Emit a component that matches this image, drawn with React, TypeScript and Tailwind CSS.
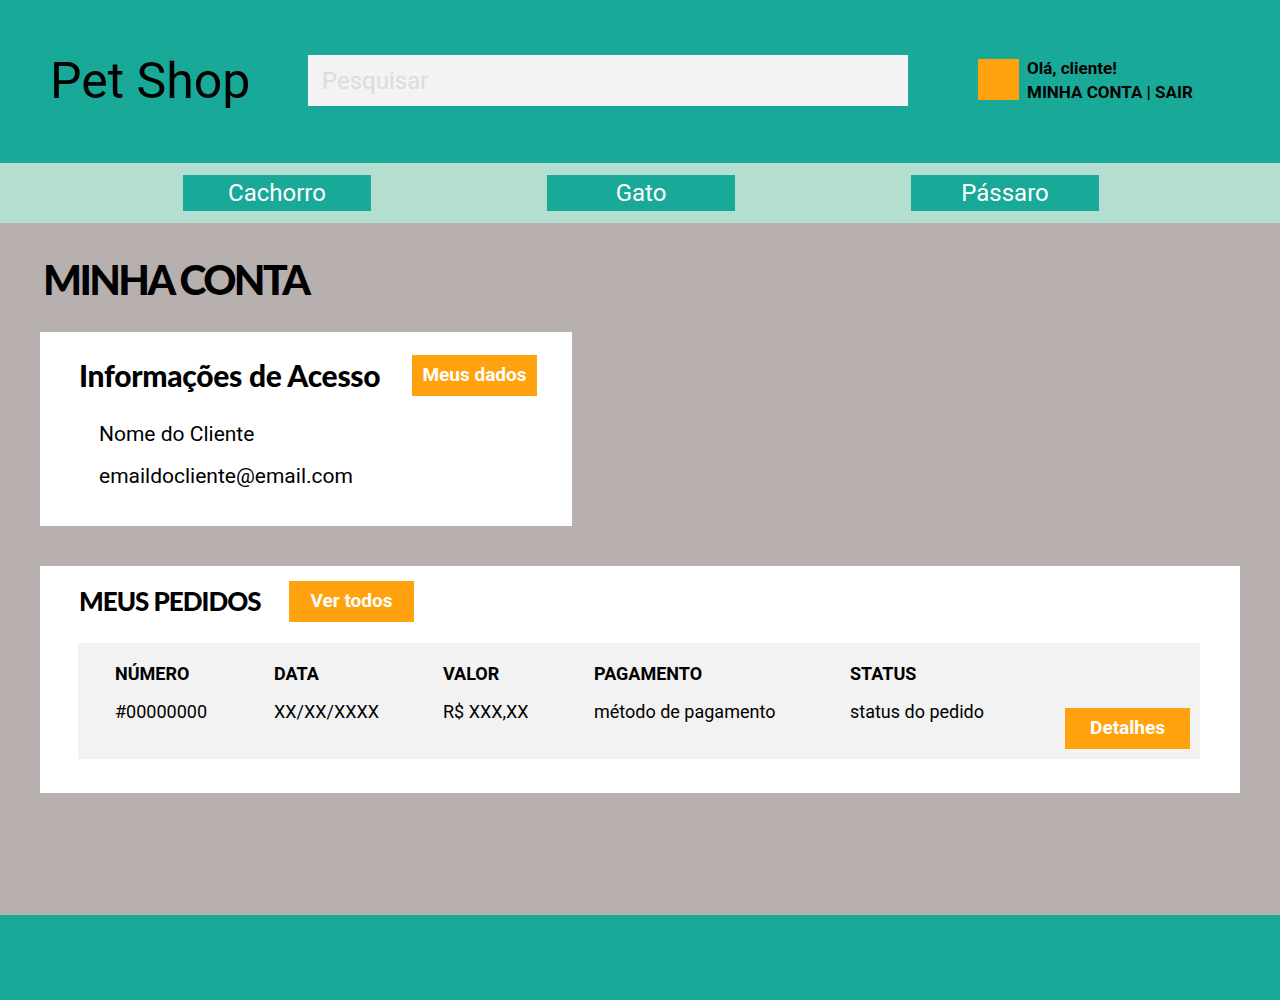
const body = "font-['Roboto','Noto_Sans',sans-serif]";
const head = "font-['Lato','Noto_Sans',sans-serif]";

function OrangeButton({ label }: { label: string }) {
  return (
    <button className={`${body} h-[41px] w-[125px] bg-[#ffa20e] text-[19px] font-bold text-white`}>
      {label}
    </button>
  );
}

const columns = [
  { title: "NÚMERO", value: "#00000000", width: "w-[159px]" },
  { title: "DATA", value: "XX/XX/XXXX", width: "w-[169px]" },
  { title: "VALOR", value: "R$ XXX,XX", width: "w-[151px]" },
  { title: "PAGAMENTO", value: "método de pagamento", width: "w-[256px]" },
  { title: "STATUS", value: "status do pedido", width: "w-[215px]" },
];

export default function App() {
  return (
    <div className={`${body} flex min-h-[1000px] flex-col bg-[#b8afaf] text-black`}>
      {/* cabeçalho */}
      <header className="flex h-[163px] items-start bg-[#19a998]">
        <h1 className="ml-[50px] mt-[51px] w-[258px] text-[50px] leading-[60px] font-normal">Pet Shop</h1>
        <div className="mt-[55px] flex h-[51px] w-[600px] items-center bg-[#f3f3f3] px-[14px]">
          <span className="text-[24px] text-[#dcdcdc]">Pesquisar</span>
        </div>
        <div className="ml-[70px] mt-[59px] flex gap-2">
          <div className="h-[41px] w-[41px] bg-[#ffa20e]" />
          <div className="-mt-[3px] flex flex-col text-[17px] font-bold leading-[24px]">
            <span>Olá, cliente!</span>
            <span>MINHA CONTA | SAIR</span>
          </div>
        </div>
      </header>

      {/* categorias */}
      <nav className="flex h-[60px] items-center gap-[176px] bg-[#b4dfd0] pl-[183px]">
        {["Cachorro", "Gato", "Pássaro"].map((c) => (
          <a key={c} className="flex h-[36px] w-[188px] items-center justify-center bg-[#19a998] text-[24px] text-white">
            {c}
          </a>
        ))}
      </nav>

      <main className="flex flex-1 flex-col px-[40px] pb-[122px]">
        <h2 className={`${head} ml-[3px] mt-[32px] text-[41px] leading-[50px] font-black tracking-[-2.6px]`}>MINHA CONTA</h2>

        <section className="mt-[27px] w-[532px] bg-white pb-[36px] pl-[39px] pt-[21px]">
          <div className="flex items-center">
            <h3 className={`${head} w-[333px] text-[30px] font-black tracking-[-0.3px]`}>Informações de Acesso</h3>
            <OrangeButton label="Meus dados" />
          </div>
          <div className="ml-[20px] mt-[22px] flex flex-col gap-[14px] text-[21px] leading-[28px]">
            <span>Nome do Cliente</span>
            <span>emaildocliente@email.com</span>
          </div>
        </section>

        <section className="mt-[40px] bg-white pb-[34px] pl-[38px] pr-[40px] pt-[15px]">
          <div className="flex items-center">
            <h3 className={`${head} ml-[1px] w-[210px] text-[26px] font-black tracking-[-1px]`}>MEUS PEDIDOS</h3>
            <OrangeButton label="Ver todos" />
          </div>
          <div className="mt-[21px] flex h-[116px] items-start bg-[#f2f2f2] pl-[37px] pr-[10px]">
            {columns.map((col) => (
              <div key={col.title} className={`${col.width} mt-[19px] flex flex-col gap-[14px] text-[18px] leading-[24px]`}>
                <span className="font-bold">{col.title}</span>
                <span>{col.value}</span>
              </div>
            ))}
            <div className="ml-auto mt-[65px]">
              <OrangeButton label="Detalhes" />
            </div>
          </div>
        </section>
      </main>

      <footer className="h-[85px] bg-[#19a998]" />
    </div>
  );
}
